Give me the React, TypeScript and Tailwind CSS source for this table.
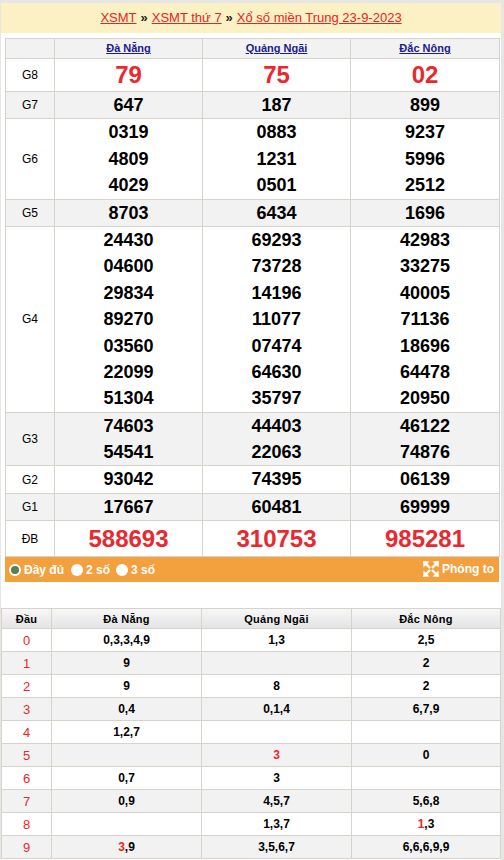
import React from "react";

type Row = { label: string; vals: string[][]; kind: "big" | "normal" };

const rows: Row[] = [
  { label: "G8", vals: [["79"], ["75"], ["02"]], kind: "big" },
  { label: "G7", vals: [["647"], ["187"], ["899"]], kind: "normal" },
  {
    label: "G6",
    vals: [
      ["0319", "4809", "4029"],
      ["0883", "1231", "0501"],
      ["9237", "5996", "2512"],
    ],
    kind: "normal",
  },
  { label: "G5", vals: [["8703"], ["6434"], ["1696"]], kind: "normal" },
  {
    label: "G4",
    vals: [
      ["24430", "04600", "29834", "89270", "03560", "22099", "51304"],
      ["69293", "73728", "14196", "11077", "07474", "64630", "35797"],
      ["42983", "33275", "40005", "71136", "18696", "64478", "20950"],
    ],
    kind: "normal",
  },
  {
    label: "G3",
    vals: [
      ["74603", "54541"],
      ["44403", "22063"],
      ["46122", "74876"],
    ],
    kind: "normal",
  },
  { label: "G2", vals: [["93042"], ["74395"], ["06139"]], kind: "normal" },
  { label: "G1", vals: [["17667"], ["60481"], ["69999"]], kind: "normal" },
  { label: "ĐB", vals: [["588693"], ["310753"], ["985281"]], kind: "big" },
];

type Part = { t: string; red?: boolean };
const lotoRows: Part[][][] = [
  [[{ t: "0,3,3,4,9" }], [{ t: "1,3" }], [{ t: "2,5" }]],
  [[{ t: "9" }], [], [{ t: "2" }]],
  [[{ t: "9" }], [{ t: "8" }], [{ t: "2" }]],
  [[{ t: "0,4" }], [{ t: "0,1,4" }], [{ t: "6,7,9" }]],
  [[{ t: "1,2,7" }], [], []],
  [[], [{ t: "3", red: true }], [{ t: "0" }]],
  [[{ t: "0,7" }], [{ t: "3" }], []],
  [[{ t: "0,9" }], [{ t: "4,5,7" }], [{ t: "5,6,8" }]],
  [[], [{ t: "1,3,7" }], [{ t: "1", red: true }, { t: ",3" }]],
  [[{ t: "3", red: true }, { t: ",9" }], [{ t: "3,5,6,7" }], [{ t: "6,6,6,9,9" }]],
];

function ExpandIcon() {
  return (
    <svg width="16" height="16" viewBox="0 0 16 16" fill="none">
      <g stroke="#fff" strokeWidth="2.4" strokeLinecap="butt">
        <line x1="2" y1="2" x2="7" y2="7" />
        <line x1="14" y1="2" x2="9" y2="7" />
        <line x1="2" y1="14" x2="7" y2="9" />
        <line x1="14" y1="14" x2="9" y2="9" />
      </g>
      <g fill="#fff">
        <polygon points="0,0 6.5,0.6 0.6,6.5" />
        <polygon points="16,0 9.5,0.6 15.4,6.5" />
        <polygon points="0,16 6.5,15.4 0.6,9.5" />
        <polygon points="16,16 9.5,15.4 15.4,9.5" />
      </g>
    </svg>
  );
}

export default function App() {
  return (
    <div className="w-[504px] h-[860px] bg-white font-['Liberation_Sans',Arial,sans-serif] overflow-hidden">
      <div className="border-t-[3px] border-l border-r-[3px] border-[#e6e6e6] h-[860px]">
        {/* title */}
        <div className="h-[30px] bg-[#fcf1c4] flex items-center justify-center text-[13px] text-[#e8231f] gap-[4px]">
          <span className="underline">XSMT</span>
          <span className="text-[#222] font-bold">»</span>
          <span className="underline">XSMT thứ 7</span>
          <span className="text-[#222] font-bold">»</span>
          <span className="underline">Xổ số miền Trung 23-9-2023</span>
        </div>

        {/* results table */}
        <div className="pl-[4px] pt-[5px]">
          <div className="w-[495px] grid grid-cols-[48px_147px_147px_148px] gap-px bg-[#d7d3ca] p-px">
            <div className="bg-[#f2f2f2] h-[19px]" />
            {["Đà Nẵng", "Quảng Ngãi", "Đắc Nông"].map((p) => (
              <div
                key={p}
                className="bg-[#f2f2f2] h-[19px] flex items-center justify-center text-[11px] font-bold text-[#1c1c8c] underline"
              >
                {p}
              </div>
            ))}
            {rows.map((r, i) => {
              const bg = i % 2 === 1 ? "bg-[#f2f2f2]" : "bg-white";
              const h =
                r.label === "G8" ? "h-[32px]" : r.label === "ĐB" ? "h-[35px]" : "";
              return (
                <React.Fragment key={r.label}>
                  <div
                    className={`${bg} ${h} flex items-center justify-center text-[12px] text-black`}
                  >
                    {r.label}
                  </div>
                  {r.vals.map((col, j) => (
                    <div
                      key={j}
                      className={`${bg} ${h} flex flex-col items-center justify-center`}
                    >
                      {col.map((n) =>
                        r.kind === "big" ? (
                          <div
                            key={n}
                            className="text-[24px] font-bold text-[#e8292f] leading-[28px]"
                          >
                            {n}
                          </div>
                        ) : (
                          <div
                            key={n}
                            className="text-[18px] font-bold text-black leading-[26.4px] h-[26.4px]"
                          >
                            {n}
                          </div>
                        )
                      )}
                    </div>
                  ))}
                </React.Fragment>
              );
            })}
          </div>
          {/* orange bar */}
          <div className="w-[494px] h-[25px] bg-[#f3a03f] flex items-center justify-between pl-[4px] pr-[5px] text-white font-bold text-[12px]">
            <div className="flex items-center">
              <span className="w-[12px] h-[12px] rounded-full bg-white flex items-center justify-center">
                <span className="w-[8px] h-[8px] rounded-full bg-[#5b7d58]" />
              </span>
              <span className="ml-[3px]">Đầy đủ</span>
              <span className="ml-[7px] w-[12px] h-[12px] rounded-full bg-white" />
              <span className="ml-[3px]">2 số</span>
              <span className="ml-[6px] w-[12px] h-[12px] rounded-full bg-white" />
              <span className="ml-[3px]">3 số</span>
            </div>
            <div className="flex items-center -mt-[2px]">
              <ExpandIcon />
              <span className="ml-[3px]">Phóng to</span>
            </div>
          </div>
        </div>

        {/* loto table */}
        <div className="mt-[26px]">
          <div className="w-[500px] grid grid-cols-[49px_149px_149px_148px] gap-px bg-[#d7d3ca] p-px">
            {["Đầu", "Đà Nẵng", "Quảng Ngãi", "Đắc Nông"].map((h) => (
              <div
                key={h}
                className="h-[19px] bg-gradient-to-b from-[#f7f7f7] to-[#e4e4e4] flex items-center justify-center text-[11px] font-bold text-black tracking-[0.3px]"
              >
                {h}
              </div>
            ))}
            {lotoRows.map((r, i) => {
              const bg = i % 2 === 1 ? "bg-[#f2f2f2]" : "bg-white";
              return (
                <React.Fragment key={i}>
                  <div
                    className={`${bg} h-[22px] flex items-center justify-center text-[13px] text-[#e8262b]`}
                  >
                    {i}
                  </div>
                  {r.map((parts, j) => (
                    <div
                      key={j}
                      className={`${bg} h-[22px] flex items-center justify-center text-[12px] font-bold text-black`}
                    >
                      {parts.map((p, k) => (
                        <span key={k} className={p.red ? "text-[#e8262b]" : ""}>
                          {p.t}
                        </span>
                      ))}
                    </div>
                  ))}
                </React.Fragment>
              );
            })}
          </div>
        </div>
      </div>
    </div>
  );
}
